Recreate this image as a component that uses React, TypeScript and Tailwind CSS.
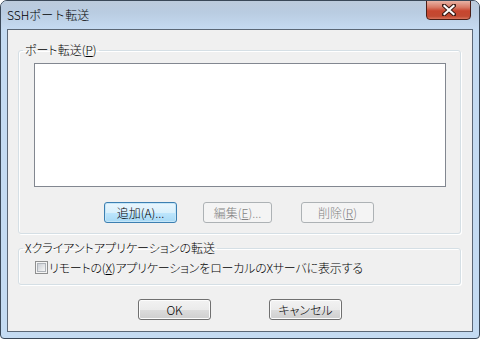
import React from "react";

const font = "font-['Noto_Sans_CJK_JP','Noto_Sans',sans-serif]";

function Btn({ children, variant = "normal", w = "w-[73px]" }: { children: React.ReactNode; variant?: "normal" | "default" | "disabled"; w?: string }) {
  const base = `${w} h-[21px] rounded-[3px] border flex items-center justify-center text-[12px] leading-none`;
  if (variant === "default")
    return (
      <div className={`${base} border-[#3c7fb1] bg-[linear-gradient(#eaf6fd_0%,#d9f0fc_50%,#bee6fd_51%,#a7d9f5_100%)] text-black shadow-[inset_0_0_0_1px_#c5e6f8]`}>
        {children}
      </div>
    );
  if (variant === "disabled")
    return <div className={`${base} border-[#adb2b5] bg-[#f4f4f4] text-[#838383]`}>{children}</div>;
  return (
    <div className={`${base} border-[#707070] bg-[linear-gradient(#f2f2f2_0%,#ebebeb_50%,#dddddd_51%,#cfcfcf_100%)] text-black shadow-[inset_0_0_0_1px_#fcfcfc]`}>
      {children}
    </div>
  );
}

export default function App() {
  return (
    <div className={`${font} font-light w-[480px] h-[339px] flex flex-col bg-[#c4dbf2] border border-[#3a4858] rounded-t-[7px] rounded-b-[4px] overflow-hidden text-black [font-feature-settings:'palt']`}>
      {/* title bar */}
      <div className="h-[28px] flex items-start bg-[linear-gradient(#bccbdc_0%,#b9cce1_40%,#c5daf1_100%)]">
        <div className="pl-[6px] pt-[7px] text-[12px] leading-[14px] [font-feature-settings:normal]">SSHポート転送</div>
        <div className="ml-auto mr-[8px] -mt-px w-[45px] h-[20px] rounded-b-[4px] border border-[#4b1f17] bg-[linear-gradient(#e8b2a4_0%,#d87a66_35%,#c7462f_55%,#c24a32_85%,#d9745d_100%)] flex items-center justify-center">
          <svg width="14" height="12" viewBox="0 0 14 12">
            <path d="M2 1.5 L12 10.5 M12 1.5 L2 10.5" stroke="#3a1a14" strokeWidth="4.2" strokeLinecap="square" />
            <path d="M2.5 2 L11.5 10 M11.5 2 L2.5 10" stroke="#ffffff" strokeWidth="2.2" strokeLinecap="square" />
          </svg>
        </div>
      </div>
      {/* client */}
      <div className="flex-1 mx-[6px] mb-[6px] border border-[#5b6776] bg-[#f0f0f0] flex flex-col text-[12px]">
        <fieldset className="ml-[10px] mt-[12px] w-[443px] border border-[#d5dfe5] rounded-[3px] pb-[10px] shadow-[inset_1px_1px_0_#ffffff,1px_1px_0_#ffffff]">
          <legend className="ml-[4px] px-[2px] leading-[16px]">ポート転送(<u>P</u>)</legend>
          <div className="ml-[15px] mt-[5px] w-[412px] h-[124px] border border-[#828790] bg-white" />
          <div className="flex mt-[15px]">
            <div className="ml-[85px]">
              <Btn variant="default">追加(A)...</Btn>
            </div>
            <div className="ml-[26px]">
              <Btn variant="disabled" w="w-[69px]">編集(<u>E</u>)...</Btn>
            </div>
            <div className="ml-[29px]">
              <Btn variant="disabled">削除(<u>R</u>)</Btn>
            </div>
          </div>
        </fieldset>
        <fieldset className="ml-[10px] mt-[6px] w-[443px] border border-[#d5dfe5] rounded-[3px] pb-[10px] shadow-[inset_1px_1px_0_#ffffff,1px_1px_0_#ffffff]">
          <legend className="ml-[4px] px-[2px] leading-[16px]">Xクライアントアプリケーションの転送</legend>
          <div className="ml-[16px] mt-[5px] flex items-center h-[13px]">
            <div className="w-[13px] h-[13px] border border-[#8e8f8f] bg-[#f4f4f4] p-px">
              <div className="w-full h-full border border-[#aeb3b9] bg-[linear-gradient(135deg,#cbcfd5,#f6f6f6)]" />
            </div>
            <span className="ml-[1px] leading-[16px] tracking-[-0.2px]">リモートの(<u>X</u>)アプリケーションをローカルのXサーバに表示する</span>
          </div>
        </fieldset>
        <div className="flex mt-[14px] ml-[130px]">
          <Btn>OK</Btn>
          <div className="ml-[58px]">
            <Btn>キャンセル</Btn>
          </div>
        </div>
      </div>
    </div>
  );
}
